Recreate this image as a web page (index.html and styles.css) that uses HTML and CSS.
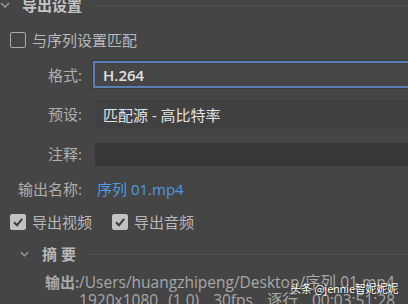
FILE: index.html
```html
<!DOCTYPE html>
<html lang="zh">
<head>
<meta charset="utf-8">
<link rel="stylesheet" href="styles.css">
</head>
<body>
<div class="panel">
  <div class="hdr">
    <svg class="chev chev-top" viewBox="0 0 10 6" width="10" height="6"><path d="M1 1 L5 5 L9 1" fill="none" stroke="#9a9a9a" stroke-width="1.5"/></svg>
    <span class="hdr-text">导出设置</span>
    <span class="hdr-line"></span>
  </div>

  <div class="check-row match">
    <span class="cb"></span>
    <span class="cb-label">与序列设置匹配</span>
  </div>

  <div class="form">
    <div class="lbl r-format">格式:</div>
    <div class="field focus r-format">H.264</div>

    <div class="lbl r-preset">预设:</div>
    <div class="field preset r-preset">匹配源 - 高比特率</div>

    <div class="lbl r-notes">注释:</div>
    <div class="field notes r-notes"></div>

    <div class="lbl r-name">输出名称:</div>
    <div class="link r-name">序列 01.mp4</div>
  </div>

  <div class="check-row exports">
    <span class="cb on"><svg viewBox="0 0 16 16" width="16" height="16"><path d="M4 8.2 L7 11.2 L12.2 4.8" fill="none" stroke="#3e3e3e" stroke-width="2"/></svg></span>
    <span class="cb-label">导出视频</span>
    <span class="cb on second"><svg viewBox="0 0 16 16" width="16" height="16"><path d="M4 8.2 L7 11.2 L12.2 4.8" fill="none" stroke="#3e3e3e" stroke-width="2"/></svg></span>
    <span class="cb-label">导出音频</span>
  </div>

  <div class="sum-hdr">
    <svg class="chev" viewBox="0 0 10 6" width="9" height="6"><path d="M1 1 L5 5 L9 1" fill="none" stroke="#9a9a9a" stroke-width="1.5"/></svg>
    <span class="sum-text">摘 要</span>
    <span class="sum-line"></span>
  </div>

  <div class="summary">
    <div class="sum-lbl">输出:</div>
    <div class="sum-val">
      <div class="sum-row">/Users/huangzhipeng/Desktop/序列 01.mp4</div>
      <div class="sum-row wide">1920x1080 (1.0), 30fps, 逐行, 00:03:51:28</div>
    </div>
  </div>
</div>
<div class="watermark">头条 @jennie智妮妮妮</div>
</body>
</html>
```

FILE: styles.css
```css
html, body {
  margin: 0;
  padding: 0;
  background: #454545;
  width: 408px;
  height: 304px;
  overflow: hidden;
}
body {
  position: relative;
  font-family: "Open Sans", "Noto Sans CJK SC", sans-serif;
  font-size: 15px;
  color: #b4b4b4;
}
.panel {
  display: flex;
  flex-direction: column;
}
.hdr {
  display: flex;
  align-items: center;
  height: 20px;
  margin-top: -5px;
}
.hdr-text {
  margin-left: 12px;
  color: #c4c4c4;
  font-weight: 600;
  line-height: 20px;
}
.hdr-line {
  flex: 1;
  height: 1px;
  background: #505050;
  margin-left: 10px;
}
.check-row {
  display: flex;
  align-items: center;
  height: 18px;
  padding-left: 10px;
}
.match {
  margin-top: 16px;
}
.cb {
  width: 16px;
  height: 16px;
  box-sizing: border-box;
  border: 1.5px solid #aaaaaa;
  border-radius: 2px;
  flex: none;
}
.cb.on {
  background: #c2c2c2;
  border-color: #c2c2c2;
  display: flex;
  align-items: center;
  justify-content: center;
}
.cb.on svg {
  flex: none;
}
.cb.second {
  margin-left: 20px;
}
.cb-label {
  margin-left: 6px;
  line-height: 18px;
  color: #b8b8b8;
}
.form {
  display: grid;
  grid-template-columns: 82px 1fr;
  grid-template-rows: 23px 28px 23px 20px;
  column-gap: 13px;
  row-gap: 14px;
  margin-top: 14px;
  align-items: center;
}
.form .r-notes { margin-top: 1px; }
.lbl {
  text-align: right;
  color: #b0b0b0;
  line-height: 20px;
}
.field {
  height: 100%;
  box-sizing: border-box;
  display: flex;
  align-items: center;
  padding-left: 8px;
  color: #e2e2e2;
}
.focus {
  background: #464646;
  box-shadow: 0 0 0 2px #5b7fb3, 0 0 0 3px #3a3a3a;
  font-weight: 600;
}
.preset {
  background: #414141;
  border-top: 1px solid #3b3b3b;
}
.notes {
  background: #383838;
  height: 23px;
}
.link {
  color: #4b9be0;
  line-height: 20px;
  padding-left: 2px;
}
.exports {
  margin-top: 14px;
}
.sum-hdr {
  display: flex;
  align-items: center;
  height: 18px;
  margin-top: 14px;
  padding-left: 20px;
}
.sum-text {
  margin-left: 13px;
  font-weight: 600;
  color: #b8b8b8;
  line-height: 18px;
}
.sum-line {
  flex: 1;
  height: 1px;
  background: #505050;
  margin-left: 12px;
}
.summary {
  display: flex;
  margin-top: 10px;
  padding-left: 45px;
  line-height: 18px;
  color: #a8a8a8;
}
.sum-lbl {
  flex: none;
  font-weight: 600;
}
.sum-val {
  margin-left: 0;
  white-space: nowrap;
  font-size: 15.5px;
}
.sum-row {
  line-height: 18px;
}
.sum-row.wide {
  word-spacing: 6px;
}
.watermark {
  position: absolute;
  right: 10px;
  top: 280px;
  font-size: 11px;
  letter-spacing: -0.2px;
  line-height: 16px;
  color: #ffffff;
  font-family: "Noto Sans CJK SC", sans-serif;
  text-shadow: 0 0 2px rgba(0,0,0,0.7);
}
```
